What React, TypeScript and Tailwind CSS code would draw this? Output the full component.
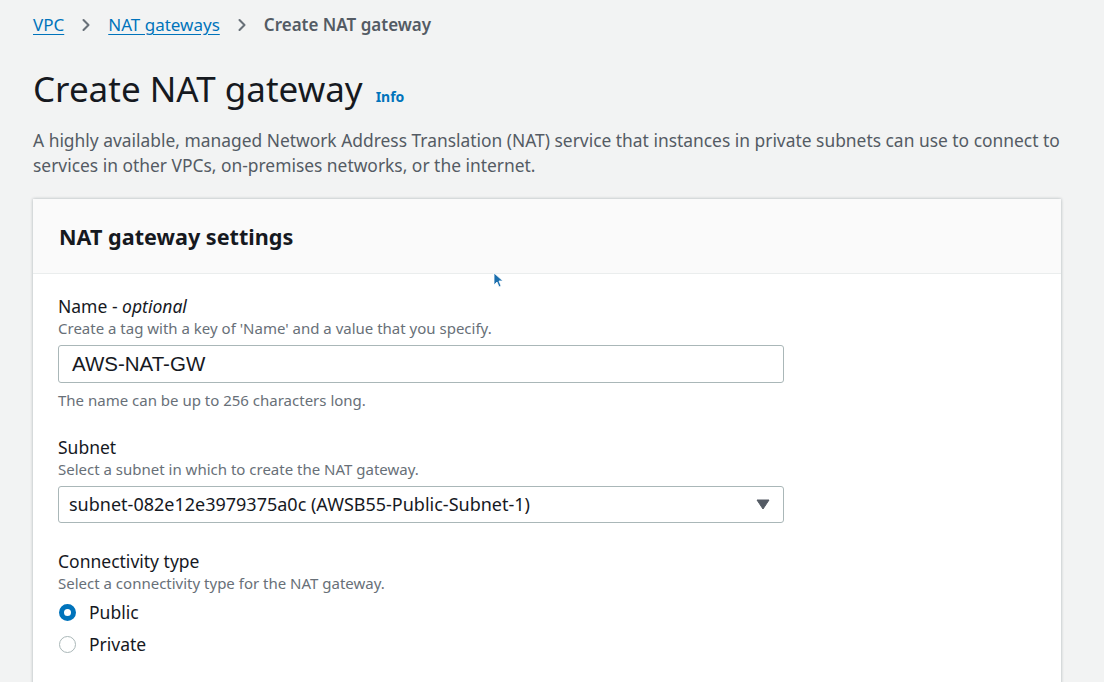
import { ChevronRight } from "lucide-react";

const font = { fontFamily: '"Noto Sans", "Open Sans", sans-serif' };

function Field({
  label,
  optional,
  hint,
  children,
}: {
  label: string;
  optional?: boolean;
  hint: string;
  children: React.ReactNode;
}) {
  return (
    <div>
      <div className="text-[17.5px] leading-[23px] text-[#16191f]">
        {label}
        {optional && (
          <>
            {" - "}
            <i>optional</i>
          </>
        )}
      </div>
      <div className="text-[15px] leading-[20px] text-[#687078]">{hint}</div>
      <div className="mt-[7px]">{children}</div>
    </div>
  );
}

function Radio({ label, checked }: { label: string; checked?: boolean }) {
  return (
    <div className="flex h-[32px] items-center gap-[13px] pl-[1px]">
      {checked ? (
        <span className="h-[17px] w-[17px] rounded-full border-[5px] border-[#0073bb] bg-white" />
      ) : (
        <span className="h-[17px] w-[17px] rounded-full border border-[#aab7b8] bg-white" />
      )}
      <span className="text-[17.5px] text-[#16191f]">{label}</span>
    </div>
  );
}

export default function App() {
  return (
    <div
      className="relative h-[682px] w-[1104px] overflow-hidden bg-[#f2f3f3] pl-[33px] pr-[43px]"
      style={font}
    >
      <nav className="flex h-[50px] items-center text-[17px]">
        <a className="text-[#0073bb] underline underline-offset-[3px]">VPC</a>
        <ChevronRight className="mx-[12px] h-[20px] w-[20px] text-[#687078]" strokeWidth={2.5} />
        <a className="text-[#0073bb] underline underline-offset-[3px]">NAT gateways</a>
        <ChevronRight className="mx-[12px] h-[20px] w-[20px] text-[#687078]" strokeWidth={2.5} />
        <span className="font-semibold text-[#545b64]">Create NAT gateway</span>
      </nav>

      <div className="mt-[16px] flex items-baseline gap-[13px]">
        <h1 className="text-[35px] leading-[46px] text-[#16191f]">Create NAT gateway</h1>
        <span className="text-[14px] font-bold text-[#0073bb]">Info</span>
      </div>

      <p className="mt-[16px] text-[17.4px] leading-[25px] text-[#545b64]">
        A highly available, managed Network Address Translation (NAT) service that instances in private subnets can use to connect to services in other VPCs, on-premises networks, or the internet.
      </p>

      <section className="mt-[21px] h-[600px] bg-white shadow-[0_0_3px_rgba(0,28,36,0.3)]">
        <header className="flex h-[75px] items-center border-b border-[#eaeded] bg-[#fafafa] px-[26px] pt-[2px]">
          <h2 className="text-[21.6px] font-bold text-[#16191f]">NAT gateway settings</h2>
        </header>
        <div className="flex flex-col gap-[24px] px-[25px] pt-[21px]">
          <div>
            <Field label="Name" optional hint="Create a tag with a key of 'Name' and a value that you specify.">
              <div
                className="flex h-[38px] w-[726px] items-center rounded-[3px] border border-[#aab7b8] px-[13px] text-[20.5px] text-[#16191f]"
                style={{ fontFamily: '"Liberation Sans", Arial, sans-serif' }}
              >
                AWS-NAT-GW
              </div>
            </Field>
            <div className="mt-[6px] text-[15px] text-[#687078]">
              The name can be up to 256 characters long.
            </div>
          </div>

          <Field label="Subnet" hint="Select a subnet in which to create the NAT gateway.">
            <div className="flex h-[37px] w-[726px] items-center justify-between rounded-[3px] border border-[#aab7b8] pl-[10px] pr-[13px] text-[18px] text-[#16191f]">
              <span>subnet-082e12e3979375a0c (AWSB55-Public-Subnet-1)</span>
              <svg width="14" height="11" viewBox="0 0 14 11">
                <path d="M1 1h12L7 10z" fill="#545b64" stroke="#545b64" strokeLinejoin="round" />
              </svg>
            </div>
          </Field>

          <div className="mt-[3px]">
            <Field label="Connectivity type" hint="Select a connectivity type for the NAT gateway.">
              <div className="-mt-[3px]">
                <Radio label="Public" checked />
                <Radio label="Private" />
              </div>
            </Field>
          </div>
        </div>
      </section>

      <svg className="absolute left-[493px] top-[272px]" width="10" height="16" viewBox="0 0 10 16">
        <path d="M1 1v12l3-3 2 5 2-1-2-5h4z" fill="#1b6fae" stroke="#fff" strokeWidth="0.8" />
      </svg>
    </div>
  );
}
